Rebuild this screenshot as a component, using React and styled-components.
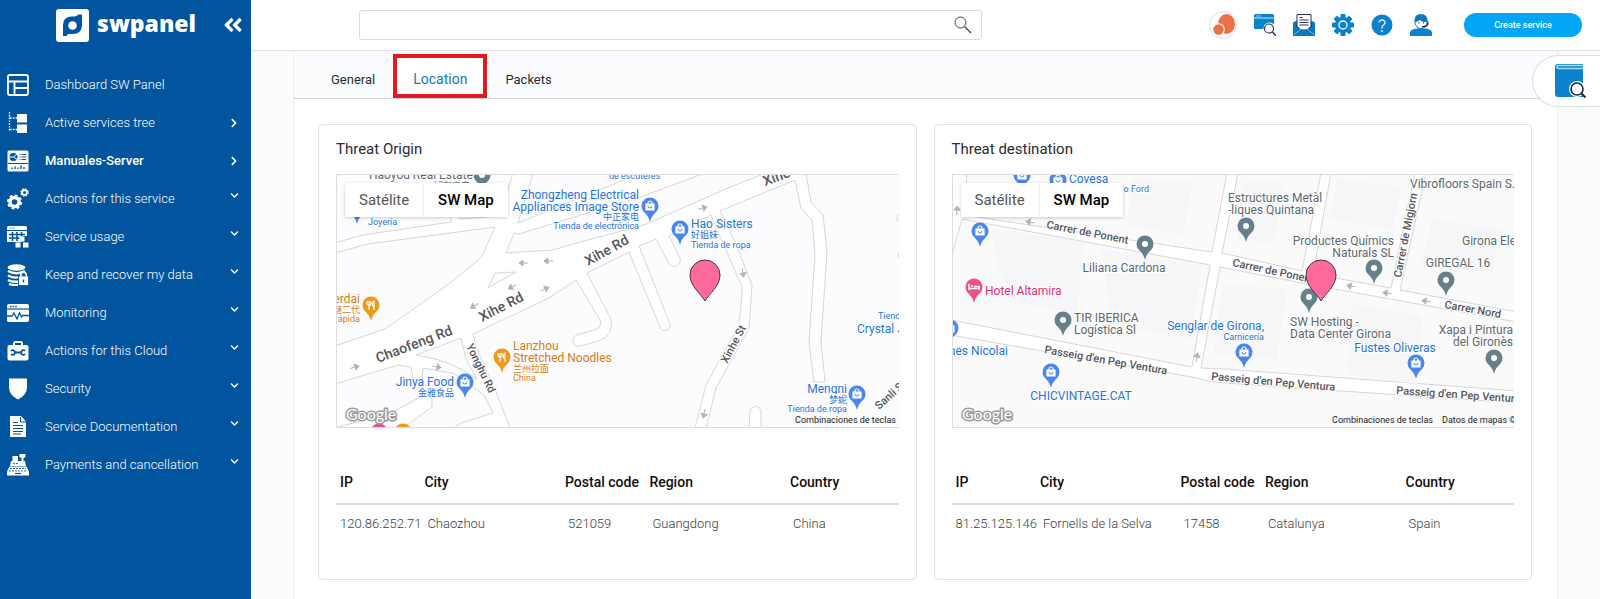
import React from "react";
import styled, { createGlobalStyle } from "styled-components";
import { FaChevronDown, FaChevronRight, FaAngleDoubleLeft } from "react-icons/fa";

const GlobalStyle = createGlobalStyle`
    * {
        box-sizing: border-box;
    }

    body {
        margin: 0;
        font-family: Roboto, "Noto Sans CJK SC", sans-serif;
        font-size: 14px;
        color: #2b2b33;
        background: #fcfcfd;
    }
`;

const Page = styled.div`
    display: flex;
    align-items: stretch;
    min-height: 100vh;
`;

const Sidebar = styled.aside`
    width: 251px;
    flex-shrink: 0;
    background: #01549e;
    color: #fff;
`;

const SidebarTop = styled.div`
    height: 48px;
    display: flex;
    align-items: center;
    padding: 2px 7px 0 56px;
`;

const Brand = styled.a`
    flex: 1;
    display: flex;
    align-items: center;
    gap: 8px;
    color: #fff;
    font-family: "Open Sans", sans-serif;
    font-size: 23px;
    line-height: 32px;
    font-weight: 800;
    text-decoration: none;

    span {
        padding-bottom: 4px;
    }
`;

const PlainButton = styled.button`
    display: flex;
    padding: 0;
    border: 0;
    background: none;
    color: inherit;
    cursor: pointer;
`;

const Menu = styled.ul`
    list-style: none;
    margin: 0;
    padding: 18px 0 0;
`;

const MenuLink = styled.a`
    height: 38px;
    display: flex;
    align-items: center;
    gap: 16px;
    padding: 0 12px 0 7px;
    color: #fff;
    font-size: 13px;
    font-weight: ${(props) => (props.$active ? 500 : 300)};
    line-height: 20px;
    text-decoration: none;

    > span {
        flex: 1;
    }
`;

const Arrow = styled.i`
    display: flex;
    padding-bottom: ${(props) => (props.$raised ? 8 : 0)}px;
    stroke: #fff;
    stroke-width: 40px;
`;

const Content = styled.div`
    flex: 1;
    min-width: 0;
    display: flex;
    flex-direction: column;
`;

const Header = styled.header`
    height: 51px;
    display: flex;
    align-items: center;
    justify-content: space-between;
    padding: 0 18px 1px 108px;
    background: #fff;
    border-bottom: 1px solid #dfe1ea;
`;

const Search = styled.form`
    flex: 0 1 623px;
    height: 30px;
    display: flex;
    align-items: center;
    padding-right: 9px;
    border: 1px solid #d9dadf;
    border-radius: 3px;
    color: #444;

    input {
        flex: 1;
        height: 100%;
        border: 0;
        outline: 0;
        padding: 0 10px;
        background: none;
        font: inherit;
    }
`;

const Tools = styled.div`
    display: flex;
    align-items: center;
    gap: 17px;
`;

const CreateButton = styled.button`
    width: 118px;
    height: 24px;
    margin-left: 15px;
    border: 0;
    border-radius: 12px;
    background: #03a5f5;
    color: #fff;
    font-family: inherit;
    font-size: 9px;
    font-weight: 500;
`;

const Main = styled.main`
    flex: 1;
    margin: 0 42px;
    background: #fff;
    border: 1px solid #ededf2;
    border-width: 0 1px;
`;

const TabBar = styled.div`
    height: 48px;
    display: flex;
    align-items: flex-end;
    padding-left: 19px;
    background: #fbfcfe;
    border-bottom: 1px solid #d3d6df;
`;

const Tab = styled.button`
    height: 44px;
    padding: 6px ${(props) => (props.$active ? 16 : 18)}px 0;
    border: ${(props) => (props.$active ? "4px solid #e3191f" : "0")};
    background: ${(props) => (props.$active ? "#fff" : "none")};
    color: ${(props) => (props.$active ? "#0f7cc1" : "#2b2b33")};
    font: inherit;
    font-size: ${(props) => (props.$active ? 14 : 13)}px;
`;

const Cards = styled.div`
    display: grid;
    grid-template-columns: 1fr 1fr;
    gap: 17px;
    padding: 25px 25px 20px 24px;
`;

const Card = styled.section`
    min-width: 0;
    padding: 14px 17px 37px;
    border: 1px solid #e1e2ea;
    border-radius: 4px;
`;

const CardTitle = styled.h2`
    margin: 0 0 15px;
    font-size: 15px;
    line-height: 20px;
    font-weight: 400;
`;

const MapBox = styled.div`
    position: relative;
    height: 254px;
    overflow: hidden;

    > svg {
        display: block;
    }

    &::after {
        content: "";
        position: absolute;
        inset: 0;
        border: 1px solid #dcdce2;
        border-right: 0;
        pointer-events: none;
    }
`;

const MapTypes = styled.div`
    position: absolute;
    top: 9px;
    left: 9px;
    display: flex;
    background: #fff;
    box-shadow: 0 1px 3px rgba(0, 0, 0, 0.2);
`;

const MapType = styled.button`
    height: 34px;
    padding: 0 14px;
    border: 0;
    border-left: ${(props) => (props.$active ? "1px solid #eee" : "0")};
    background: #fff;
    color: ${(props) => (props.$active ? "#000" : "#565656")};
    font-family: inherit;
    font-size: 15px;
    font-weight: ${(props) => (props.$active ? 500 : 400)};
`;

const Table = styled.table`
    width: 100%;
    margin-top: 32px;
    table-layout: fixed;
    border-collapse: collapse;
    text-align: left;
    white-space: nowrap;

    th {
        height: 44px;
        padding: 0 0 0 4px;
        border-bottom: 2px solid #dcdce2;
        color: #111;
        font-weight: 500;
    }

    td {
        height: 38px;
        padding: 0 0 0 7px;
        color: #3c3c44;
        font-size: 13px;
        font-weight: 300;
    }

    td:first-child {
        padding-left: 4px;
    }
`;

const HelpTab = styled.button`
    position: absolute;
    top: 55px;
    right: 0;
    width: 68px;
    height: 52px;
    display: flex;
    align-items: center;
    padding: 0 0 0 22px;
    background: #fff;
    border: 1px solid #dcdde6;
    border-right: 0;
    border-radius: 26px 0 0 26px;
`;

const RoadText = styled.text`
    font-size: ${(props) => props.$size}px;
    font-weight: 500;
    fill: #55565c;
    stroke: #fff;
    stroke-width: 2px;
    paint-order: stroke;
`;

const PlaceText = styled.text`
    font-size: ${(props) => (props.$small ? 9 : 12)}px;
    fill: ${(props) => props.$color};
    stroke: #fff;
    stroke-width: 2px;
    paint-order: stroke;
`;

const CreditText = styled.text`
    font-size: 9px;
    fill: #222;
`;

const GoogleText = styled.text`
    font-family: Lato, sans-serif;
    font-size: 16px;
    font-weight: 400;
    fill: #fff;
    stroke: #9b9ba0;
    stroke-width: 3px;
    paint-order: stroke;
`;

/* sidebar icons, 22 x 22 */
const menuIcons = {
    dashboard: (
        <g fill="none" stroke="#fff" strokeWidth="1.8">
            <rect x="1" y="1" width="20" height="20" rx="1.5" />
            <path d="M1 7.5h20M7.5 7.5V21M7.5 14H21" />
        </g>
    ),
    tree: (
        <g fill="#fff">
            <rect x="10" y="2" width="10" height="8.5" />
            <rect x="10" y="12.5" width="10" height="8.5" />
            <path d="M2.5 0v18.5M3 6h7M3 17.5h7" fill="none" stroke="#fff" strokeWidth="1.4" strokeDasharray="1.6 1.2" />
        </g>
    ),
    server: (
        <g>
            <rect x="0.5" y="0.5" width="21" height="21" rx="1.5" fill="#fff" />
            <circle cx="6.5" cy="7" r="4" fill="#01549e" />
            <path d="M6.5 7l4-3.5M6.5 7l4.5 3M6.5 7H2" stroke="#fff" />
            <path d="M12.5 4.5h1m1 0H19M12.5 7h1m1 0H19M12.5 9.5h1m1 0H19M1 13.5h20" stroke="#01549e" strokeWidth="1.2" />
            <path d="M5 19v-1.5M8 19v-2.5M11 19v-1.5M14 19v-3.5M17 19v-2" stroke="#01549e" strokeWidth="1.4" />
        </g>
    ),
    gears: (
        <g fill="none" stroke="#fff">
            <circle cx="7.5" cy="14" r="4.5" strokeWidth="3.4" />
            <circle cx="7.5" cy="14" r="6.6" strokeWidth="2" strokeDasharray="2.9 2.28" />
            <circle cx="17.5" cy="4.5" r="2.4" strokeWidth="1.8" />
            <circle cx="17.5" cy="4.5" r="3.6" strokeWidth="1.3" strokeDasharray="1.6 1.23" />
        </g>
    ),
    usage: (
        <g fill="#fff">
            <path d="M1.5 0h17A1.5 1.5 0 0120 1.5V4H0V1.5A1.5 1.5 0 011.5 0z" />
            <path d="M0 5h20v5h-5v6H0z" />
            <path d="M2 8.5h16M2 12h12M5.5 6v9M10 6v9M14.5 6v4" stroke="#01549e" strokeWidth="1.6" />
            <path d="M2.5 2h5" stroke="#01549e" strokeDasharray="1 1" />
            <rect x="12.5" y="10.5" width="5" height="5" />
            <rect x="8.5" y="16.5" width="5" height="5" />
            <rect x="16" y="16.5" width="5.5" height="5" />
        </g>
    ),
    backup: (
        <g>
            <ellipse cx="9.5" cy="3.5" rx="9" ry="3.2" fill="#fff" />
            <path d="M1 7q8 4.500 17 0M1 11.5q7 4 15 .5M1 16q5 2.500 10 1.500M2 20q4 1.500 9 1" fill="none" stroke="#fff" strokeWidth="2.4" />
            <rect x="11.5" y="12" width="10" height="9.5" fill="#fff" stroke="#01549e" strokeWidth="0.8" />
            <path d="M13.8 12.5V11a2.700 2.700 0 015.400 0v1.500" fill="none" stroke="#fff" strokeWidth="1.5" />
            <path d="M16.5 15.5v3" stroke="#01549e" strokeWidth="1.5" />
        </g>
    ),
    monitoring: (
        <g>
            <rect x="0" y="2" width="22" height="18" rx="1.8" fill="#fff" />
            <path d="M0 7h22" stroke="#01549e" strokeWidth="1.2" />
            <path d="M3 4.500h7" stroke="#01549e" strokeWidth="1.4" strokeDasharray="1.6 1" />
            <path d="M0 14h5l2-3 3 6 2.500-6 2 4 1-1.500H22" fill="none" stroke="#01549e" strokeWidth="1.3" />
        </g>
    ),
    toolbox: (
        <g>
            <rect x="0.5" y="5" width="21" height="15.5" rx="2" fill="#fff" />
            <path d="M7 5.500V3a1 1 0 011-1h6a1 1 0 011 1v2.500" fill="none" stroke="#fff" strokeWidth="2" />
            <path d="M7 12.500h8" stroke="#01549e" strokeWidth="2" />
            <path d="M4 10.800a2.300 2.300 0 110 3.400M18 10.800a2.300 2.300 0 100 3.400" fill="none" stroke="#01549e" strokeWidth="1.7" />
        </g>
    ),
    shield: <path d="M2 0.500h18v9q0 7.500-9 12-9-4.500-9-12z" fill="#fff" />,
    document: (
        <g>
            <path d="M3 0h11l5 5.500V21H3z" fill="#fff" />
            <path d="M13.500 1v5H19M6 6.500h5M6 9.500h10M6 12.500h10M6 15.500h10M6 18h8" fill="none" stroke="#01549e" strokeWidth="1" />
        </g>
    ),
    payments: (
        <g fill="#fff">
            <path d="M12.500 0h6v3.500h-2V8h-2V3.500h-2zM5.500 2h5.500v5H5.500zM4 7h14l1 5H3z" />
            <path d="M2.500 12.500h17l2.500 5v4H0v-4z" />
            <path d="M6 9.500h5M3 14.500h16M2 17h18" stroke="#01549e" strokeWidth="0.8" strokeDasharray="2 1" />
            <path d="M8 19.500h6" stroke="#01549e" strokeWidth="1.2" />
        </g>
    ),
};

const menuItems = [
    { icon: "dashboard", label: "Dashboard SW Panel" },
    { icon: "tree", label: "Active services tree", arrow: "right" },
    { icon: "server", label: "Manuales-Server", arrow: "right", active: true },
    { icon: "gears", label: "Actions for this service", arrow: "down" },
    { icon: "usage", label: "Service usage", arrow: "down" },
    { icon: "backup", label: "Keep and recover my data", arrow: "down" },
    { icon: "monitoring", label: "Monitoring", arrow: "down" },
    { icon: "toolbox", label: "Actions for this Cloud", arrow: "down" },
    { icon: "shield", label: "Security", arrow: "down" },
    { icon: "document", label: "Service Documentation", arrow: "down" },
    { icon: "payments", label: "Payments and cancellation", arrow: "down" },
];

const toolIcons = [
    {
        label: "Browse services",
        art: (
            <g>
                <path d="M1.500 0h17A1.500 1.500 0 0120 1.500V15H0V1.500A1.500 1.500 0 011.500 0z" fill="#0a83cc" />
                <path d="M0 4h20" stroke="#fff" strokeWidth="0.8" />
                <path d="M2.500 2h5" stroke="#fff" strokeDasharray="1.4 1" />
                <circle cx="15.5" cy="14.5" r="6" fill="#fff" />
                <circle cx="15" cy="14.500" r="4.5" fill="#fff" stroke="#2a3350" strokeWidth="1.2" />
                <path d="M18.500 18l3.500 3.800" stroke="#2a3350" strokeWidth="1.5" />
            </g>
        ),
    },
    {
        label: "Messages",
        art: (
            <g>
                <path d="M0 8.500l4-2h14l4 2V22H0z" fill="#0a78bf" />
                <path d="M4 0.500h14V12l-3 3.500H7L4 12z" fill="#fff" stroke="#25305a" strokeWidth="1" />
                <path d="M6.500 3.500h3M6.500 6h9M6.500 8.500h9M6.500 11h9" stroke="#25305a" strokeWidth="1.1" />
                <path d="M1 20.500l6.500-5h7l6.500 5" fill="none" stroke="#8fd0f5" strokeWidth="0.7" />
            </g>
        ),
    },
    {
        label: "Settings",
        art: (
            <g fill="#0a83cc">
                {[0, 45, 90, 135].map((a) => (
                    <rect key={a} x="8.5" y="0" width="5" height="22" rx="1" transform={`rotate(${a} 11 11)`} />
                ))}
                <circle cx="11" cy="11" r="8" />
                <circle cx="11" cy="11" r="4" fill="none" stroke="#fff" strokeWidth="1.3" />
            </g>
        ),
    },
    {
        label: "Help",
        art: (
            <g>
                <circle cx="11" cy="11" r="10.5" fill="#0a83cc" />
                <path d="M8 8.500a3 3 0 116 .8c-.5 1.500-3 2-3 4V14.500" fill="none" stroke="#fff" strokeWidth="1.2" />
                <circle cx="11" cy="17" r="0.9" fill="#fff" />
            </g>
        ),
    },
    {
        label: "Support",
        art: (
            <g>
                <path d="M0 22v-3q0-4 7-4.500h8q7 .5 7 4.500v3z" fill="#0a83cc" />
                <circle cx="11" cy="8.5" r="6" fill="#fff" stroke="#0a78bf" strokeWidth="1" />
                <path d="M4.500 7Q4.500 0 11 0t6.500 7l-1.500 1q-4 .5-6-2-2 2-5.500 2z" fill="#0a78bf" />
                <path d="M17.800 7.500v2.500q-.5 2.500-5.800 2.800" fill="none" stroke="#1b2b50" strokeWidth="1.3" />
                <path d="M8.500 8.800h1M13 8.800h1" stroke="#1b2b50" strokeWidth="1.2" />
            </g>
        ),
    },
];

const pinColors = {
    shop: "#4a86ee",
    food: "#ef9a1a",
    hotel: "#ec5289",
    place: "#66808a",
};

const textColors = {
    shop: "#2573e0",
    food: "#d67a17",
    hotel: "#dd2e75",
    place: "#5c6970",
};

function Pin({ x, y, kind }) {
    return (
        <g transform={`translate(${x} ${y})`}>
            <path
                d="M0 0C-1-5-4-8-6.500-10.500A8.500 8.500 0 1 1 6.500-10.500C4-8 1-5 0 0z"
                fill={pinColors[kind]}
            />
            {kind === "shop" && (
                <g fill="none" stroke="#fff" strokeWidth="1.2">
                    <path d="M-4-18h8v6h-8z" fill="#fff" />
                    <path d="M-2-18v-1a2 2 0 014 0v1" />
                    <path d="M-2-16a2 2 0 004 0" stroke={pinColors.shop} strokeWidth="1" />
                </g>
            )}
            {kind === "food" && (
                <path d="M-2-20v9M-4-20v3q2 2 4 0v-3M3-11v-9q-2 2-1.500 5H3" fill="none" stroke="#fff" strokeWidth="1.2" />
            )}
            {kind === "hotel" && (
                <path d="M-5-19v6M-5-14.500H5V-13M-3-17h2M0-16.500h5v2" fill="none" stroke="#fff" strokeWidth="1.6" />
            )}
            {kind === "place" && <circle cx="0" cy="-16" r="3" fill="#fff" />}
        </g>
    );
}

function TargetPin({ x, y }) {
    return (
        <path
            transform={`translate(${x} ${y})`}
            d="M0 0C-4-7-15-15-15-26A15 15 0 0 1 15-26C15-15 4-7 0 0z"
            fill="#ff6a9d"
            stroke="#4b3340"
        />
    );
}

function Direction({ x, y, angle }) {
    return (
        <path
            transform={`translate(${x} ${y}) rotate(${angle})`}
            d="M-5 0H3M0-3L4 0 0 3z"
            fill="#b3b4b8"
            stroke="#b3b4b8"
        />
    );
}

const originMap = {
    land: "#fcfbfd",
    blocks: [
        "M-1-1H115V48L27 61-1 69z",
        "M124-1V45L164 42 177-1z",
        "M-1 79L32 70 159 53 146 82Q142 87 110 112L49 155-1 172z",
        "M197-1L182 49 305-1z",
        "M170 79L178 59 183 60 310 21 369-1H430L392 14 308 51 244 68 217 76z",
        "M159 99L180 98 152 114z",
        "M137 160L213 124 240 106 264 146Q266 152 261 155L241 161A5 5 0 0 0 244 172L263 167Q278 161 275 145L251 99 293 78 324 153A5 5 0 0 0 334 150L303 72 320 65 332 88A6 6 0 0 0 344 84L333 62 375 41 403 106Q407 112 406 120L403 151 370 211 359 254H174L160 218 140 173z",
        "M384 37L459 6 465 34 476 46 479 81 473 168 478 208H489L485 168 491 78 487 41 475 28 470-1H565V254H425V238A5 5 0 0 0 414 238L413 254H370L380 214 413 154 416 111 400 70z",
        "M80 181L125 164 130 185 141 205Q115 186 80 181z",
        "M87 194L117 199 148 221 157 239 125 249 118 254H67L96 233V224L86 206z",
        "M-1 210L62 191 75 193 78 210 86 208V222L57 238-1 254z",
        "M566 39a5 5 0 0 0 0 10M566 77a4 4 0 0 0 0 8",
    ],
    arrows: [
        [19, 193, -18], [101, 193, 10], [138, 132, 150], [176, 113, 155], [187, 89, 180],
        [212, 87, 180], [209, 115, -25], [367, 34, -15], [407, 99, 80], [368, 240, 100],
    ],
    roads: [
        ["Chaofeng Rd", 42, 189, -21, 14],
        ["Xihe Rd", 146, 148, -27, 14],
        ["Xihe Rd", 252, 92, -29, 14],
        ["Xihe", 429, 12, -20, 14],
        ["Yonghu Rd", 130, 172, 64, 11],
        ["Xinhe St", 391, 190, -62, 11],
        ["Sanli St", 543, 236, -42, 11],
    ],
    pins: [
        [146, 17, "place"], [21, 50, "shop"], [314, 48, "shop"], [344, 71, "shop"],
        [521, 236, "shop"], [166, 199, "food"], [129, 224, "shop"], [35, 147, "food"],
        [43, 274, "hotel"], [67, 274, "food"],
    ],
    places: [
        ["Haoyou Real Estate", 33, 5, "place"],
        ["好有房产", 98, 15, "place", "start", true],
        ["Joyería", 32, 51, "shop", "start", true],
        ["de escúteres", 273, 5, "shop", "start", true],
        ["Zhongzheng Electrical", 303, 25, "shop", "end"],
        ["Appliances Image Store", 303, 37, "shop", "end"],
        ["中正家电", 303, 46, "shop", "end", true],
        ["Tienda de electrónica", 303, 55, "shop", "end", true],
        ["Hao Sisters", 355, 54, "shop"],
        ["好姐妹", 355, 64, "shop", "start", true],
        ["Tienda de ropa", 355, 74, "shop", "start", true],
        ["Tienda", 542, 145, "shop", "start", true],
        ["Crystal J", 521, 159, "shop"],
        ["Mengni", 511, 219, "shop", "end"],
        ["梦妮", 511, 229, "shop", "end", true],
        ["Tienda de ropa", 511, 238, "shop", "end", true],
        ["Lanzhou", 177, 176, "food"],
        ["Stretched Noodles", 177, 188, "food"],
        ["兰州拉面", 177, 198, "food", "start", true],
        ["China", 177, 207, "food", "start", true],
        ["Jinya Food", 118, 212, "shop", "end"],
        ["金雅食品", 118, 222, "shop", "end", true],
        ["erdai", 24, 129, "food", "end"],
        ["魅二代", 24, 139, "food", "end", true],
        ["rápida", 24, 148, "food", "end", true],
    ],
    credits: [["Combinaciones de teclas", 560, "end"]],
};

const destinationMap = {
    land: "#fafafb",
    blocks: [
        "M15-1L11 41 260 78 275-1z",
        "M10 45L258 91 240 193-1 146V84z",
        "M-1 161L240 203Q258 208 273 209L565 229V255H-1z",
        "M268 93L350 109 565 148V217L273 195 249 194z",
        "M270 79L286-1H369L350 97z",
        "M379-1L361 100 439 114 463-1z",
        "M474-1L448 116 565 138V-1z",
    ],
    buildings: [
        "M40 55L132 68 125 140 60 128 45 90z", "M150 75L250 92 238 165 160 150z", "M180 5L240 8 232 60 175 52z",
        "M292 8H330L322 70 285 65z", "M385 5L450 12 440 55 378 45z", "M480 45L550 55 540 100 470 90z",
        "M400 130L470 142 465 210 395 200z", "M270 110L335 115 325 185 262 180z",
    ],
    arrows: [
        [78, 48, 188], [5, 36, -85], [245, 183, -80], [399, 112, 190], [435, 119, 190], [474, 127, 190],
    ],
    roads: [
        ["Carrer de Ponent", 94, 54, 11, 11],
        ["Carrer de Ponent", 280, 92, 12, 11],
        ["Carrer de Migjorn", 449, 104, -79, 11],
        ["Carrer Nord", 492, 134, 10, 11],
        ["Passeig d'en Pep Ventura", 92, 179, 10, 11],
        ["Passeig d'en Pep Ventura", 259, 206, 5, 11],
        ["Passeig d'en Pep Ventura", 444, 220, 4, 11],
    ],
    pins: [
        [70, 17, "shop"], [106, 22, "shop"], [28, 73, "shop"], [193, 86, "place"], [22, 129, "hotel"],
        [111, 162, "place"], [-2, 170, "shop"], [99, 214, "shop"], [294, 68, "place"], [422, 110, "place"],
        [494, 122, "place"], [542, 200, "place"], [464, 205, "shop"], [357, 139, "place"], [292, 194, "shop"],
    ],
    places: [
        ["Covesa", 117, 9, "shop"],
        ["o Ford", 197, 18, "shop", "end", true],
        ["Liliana Cardona", 172, 98, "place", "middle"],
        ["Hotel Altamira", 33, 121, "hotel"],
        ["TIR IBERICA", 122, 148, "place"],
        ["Logística Sl", 122, 160, "place"],
        ["nes Nicolai", 56, 181, "shop", "end"],
        ["CHICVINTAGE.CAT", 129, 226, "shop", "middle"],
        ["Vibrofloors Spain S.L.", 458, 14, "place"],
        ["Estructures Metàl", 276, 28, "place"],
        ["-liques Quintana", 276, 40, "place"],
        ["Productes Químics", 442, 71, "place", "end"],
        ["Naturals SL", 442, 83, "place", "end"],
        ["Girona Elec", 510, 71, "place"],
        ["GIREGAL 16", 506, 93, "place", "middle"],
        ["Xapa i Pintura", 561, 160, "place", "end"],
        ["del Gironès", 561, 172, "place", "end"],
        ["Fustes Oliveras", 443, 178, "shop", "middle"],
        ["SW Hosting -", 338, 152, "place"],
        ["Data Center Girona", 338, 164, "place"],
        ["Senglar de Girona,", 312, 156, "shop", "end"],
        ["Carnicería", 312, 166, "shop", "end", true],
    ],
    credits: [["Combinaciones de teclas", 481, "end"], ["Datos de mapas ©2024", 490, "start"]],
};

function StreetMap({ map, label }) {
    return (
        <MapBox>
            <svg width="100%" height="254" role="img" aria-label={label}>
                <g fill={map.land} stroke="#d6d5dc">
                    {map.blocks.map((d) => (
                        <path key={d} d={d} />
                    ))}
                </g>
                {map.buildings && (
                    <g fill="#f6f6f8">
                        {map.buildings.map((d) => (
                            <path key={d} d={d} />
                        ))}
                    </g>
                )}
                {map.arrows.map(([x, y, angle]) => (
                    <Direction key={`${x}-${y}`} x={x} y={y} angle={angle} />
                ))}
                {map.roads.map(([name, x, y, angle, size]) => (
                    <RoadText key={`${x}-${y}`} $size={size} transform={`translate(${x} ${y}) rotate(${angle})`}>
                        {name}
                    </RoadText>
                ))}
                {map.pins.map(([x, y, kind]) => (
                    <Pin key={`${x}-${y}`} x={x} y={y} kind={kind} />
                ))}
                {map.places.map(([name, x, y, kind, anchor, small]) => (
                    <PlaceText key={`${name}-${x}`} x={x} y={y} $color={textColors[kind]} $small={small} textAnchor={anchor}>
                        {name}
                    </PlaceText>
                ))}
                <TargetPin x={369} y={127} />
                <GoogleText x="10" y="246">Google</GoogleText>
                {map.credits.map(([text, x, anchor]) => (
                    <CreditText key={text} x={x} y={249} textAnchor={anchor}>{text}</CreditText>
                ))}
            </svg>
            <MapTypes>
                <MapType type="button">Satélite</MapType>
                <MapType type="button" $active>SW Map</MapType>
            </MapTypes>
        </MapBox>
    );
}

function ThreatCard({ title, map, row }) {
    return (
        <Card>
            <CardTitle>{title}</CardTitle>
            <StreetMap map={map} label={title} />
            <Table>
                <colgroup>
                    <col width="15%" />
                    <col width="25%" />
                    <col width="15%" />
                    <col width="25%" />
                    <col width="20%" />
                </colgroup>
                <thead>
                    <tr>
                        <th>IP</th>
                        <th>City</th>
                        <th>Postal code</th>
                        <th>Region</th>
                        <th>Country</th>
                    </tr>
                </thead>
                <tbody>
                    <tr>
                        {row.map((cell) => (
                            <td key={cell}>{cell}</td>
                        ))}
                    </tr>
                </tbody>
            </Table>
        </Card>
    );
}

function App() {
    return (
        <Page>
            <GlobalStyle />
            <Sidebar>
                <SidebarTop>
                    <Brand href="#">
                        <svg width="33" height="33" viewBox="0 0 33 33">
                            <rect width="33" height="33" rx="3" fill="#fff" />
                            <path d="M7 27V16Q7 8 15 7.500Q21 8 22 5.500H26V17Q25 25 17 25H12Q11 27 10 27z" fill="#01549e" />
                            <circle cx="16.5" cy="16.5" r="4.3" fill="#fff" />
                        </svg>
                        <span>swpanel</span>
                    </Brand>
                    <PlainButton type="button" aria-label="Collapse menu">
                        <FaAngleDoubleLeft size={22} />
                    </PlainButton>
                </SidebarTop>
                <nav>
                    <Menu>
                        {menuItems.map((item) => (
                            <li key={item.label}>
                                <MenuLink href="#" $active={item.active}>
                                    <svg width="22" height="22" viewBox="0 0 22 22">{menuIcons[item.icon]}</svg>
                                    <span>{item.label}</span>
                                    {item.arrow && (
                                        <Arrow $raised={item.arrow === "down"}>
                                            {item.arrow === "down" ? <FaChevronDown size={9} /> : <FaChevronRight size={10} />}
                                        </Arrow>
                                    )}
                                </MenuLink>
                            </li>
                        ))}
                    </Menu>
                </nav>
            </Sidebar>
            <Content>
                <Header>
                    <Search>
                        <input type="text" aria-label="Search" />
                        <PlainButton type="button" aria-label="Run search">
                            <svg width="18" height="18" viewBox="0 0 18 18" fill="none" stroke="#444">
                                <circle cx="6.5" cy="6.5" r="5.5" />
                                <path d="M10.500 10.500l6.500 6.500" strokeWidth="1.2" />
                            </svg>
                        </PlainButton>
                    </Search>
                    <Tools>
                        <PlainButton type="button" aria-label="Services">
                            <svg width="28" height="28" viewBox="0 0 28 28">
                                <circle cx="14" cy="14" r="13.5" fill="#fff" stroke="#dcdde8" />
                                <ellipse cx="17.5" cy="13" rx="8.5" ry="10" fill="#ee7049" />
                                <circle cx="9.5" cy="18.5" r="6.3" fill="#fff" />
                                <circle cx="9.5" cy="18.5" r="5.2" fill="#ee7049" />
                            </svg>
                        </PlainButton>
                        {toolIcons.map((tool) => (
                            <PlainButton key={tool.label} type="button" aria-label={tool.label}>
                                <svg width="22" height="22" viewBox="0 0 22 22">{tool.art}</svg>
                            </PlainButton>
                        ))}
                        <CreateButton type="button">Create service</CreateButton>
                    </Tools>
                </Header>
                <Main>
                    <TabBar>
                        <Tab type="button">General</Tab>
                        <Tab type="button" $active>Location</Tab>
                        <Tab type="button">Packets</Tab>
                    </TabBar>
                    <Cards>
                        <ThreatCard
                            title="Threat Origin"
                            map={originMap}
                            row={["120.86.252.71", "Chaozhou", "521059", "Guangdong", "China"]}
                        />
                        <ThreatCard
                            title="Threat destination"
                            map={destinationMap}
                            row={["81.25.125.146", "Fornells de la Selva", "17458", "Catalunya", "Spain"]}
                        />
                    </Cards>
                </Main>
            </Content>
            <HelpTab type="button" aria-label="Manuals">
                <svg width="32" height="34" viewBox="0 0 32 34">
                    <path d="M3 0H28V33H3Q0 33 0 30V3Q0 0 3 0z" fill="#0a83cc" />
                    <path d="M28 1.500H4Q2 1.500 2 3T4 4.500H28" fill="none" stroke="#a6def8" strokeWidth="1.6" />
                    <circle cx="22" cy="25" r="8" fill="#fff" />
                    <circle cx="22" cy="25" r="6" fill="#fff" stroke="#1d2747" strokeWidth="1.6" />
                    <path d="M26.500 29.500l4 4" stroke="#1d2747" strokeWidth="2" />
                </svg>
            </HelpTab>
        </Page>
    );
}

export default App;
